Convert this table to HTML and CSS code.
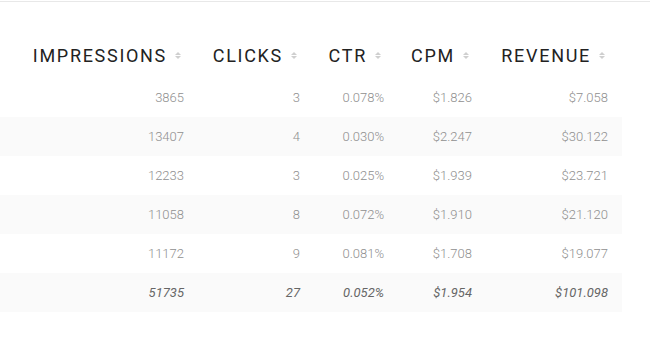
FILE: index.html
```html
<!DOCTYPE html>
<html>
<head>
<meta charset="utf-8">
<link rel="stylesheet" href="styles.css">
</head>
<body>
<div class="topline"></div>
<table class="stats">
  <colgroup>
    <col class="c1"><col class="c2"><col class="c3"><col class="c4"><col class="c5">
  </colgroup>
  <thead>
    <tr>
      <th>IMPRESSIONS<span class="sort"></span></th>
      <th>CLICKS<span class="sort"></span></th>
      <th>CTR<span class="sort"></span></th>
      <th>CPM<span class="sort"></span></th>
      <th>REVENUE<span class="sort"></span></th>
    </tr>
  </thead>
  <tbody>
    <tr><td>3865</td><td>3</td><td>0.078%</td><td>$1.826</td><td>$7.058</td></tr>
    <tr><td>13407</td><td>4</td><td>0.030%</td><td>$2.247</td><td>$30.122</td></tr>
    <tr><td>12233</td><td>3</td><td>0.025%</td><td>$1.939</td><td>$23.721</td></tr>
    <tr><td>11058</td><td>8</td><td>0.072%</td><td>$1.910</td><td>$21.120</td></tr>
    <tr><td>11172</td><td>9</td><td>0.081%</td><td>$1.708</td><td>$19.077</td></tr>
    <tr class="total"><td>51735</td><td>27</td><td>0.052%</td><td>$1.954</td><td>$101.098</td></tr>
  </tbody>
</table>
</body>
</html>
```

FILE: styles.css
```css
html, body {
  margin: 0;
  padding: 0;
  background: #fff;
  font-family: Roboto, "Liberation Sans", sans-serif;
}
.topline {
  height: 1px;
  border-bottom: 1px solid #e8e8e8;
}
.stats {
  margin-top: 30px;
  width: 622px;
  border-collapse: collapse;
  table-layout: fixed;
}
.c1 { width: 198px; }
.c2 { width: 116px; }
.c3 { width: 84px; }
.c4 { width: 88px; }
.c5 { width: 136px; }
.stats th {
  height: 46px;
  padding: 0 17px 0 0;
  text-align: right;
  vertical-align: middle;
  font-weight: 400;
  font-size: 18px;
  letter-spacing: 1.7px;
  color: #222;
  white-space: nowrap;
}
.sort {
  display: inline-block;
  width: 6px;
  height: 8px;
  margin-left: 8px;
  position: relative;
  vertical-align: middle;
  top: -1px;
}
.sort::before,
.sort::after {
  content: "";
  position: absolute;
  left: 0;
  border-left: 3px solid transparent;
  border-right: 3px solid transparent;
}
.sort::before {
  top: 0;
  border-bottom: 3.5px solid #cfcfcf;
}
.sort::after {
  top: 4.5px;
  border-top: 3.5px solid #cfcfcf;
}
.stats td {
  height: 39px;
  padding: 0 14px 0 0;
  text-align: right;
  vertical-align: middle;
  font-size: 13px;
  font-weight: 300;
  color: #8f8f8f;
}
.stats tbody tr:nth-child(even) {
  background: #fafafa;
}
.stats tr.total td {
  font-style: italic;
  font-weight: 400;
  color: #666;
}
```
